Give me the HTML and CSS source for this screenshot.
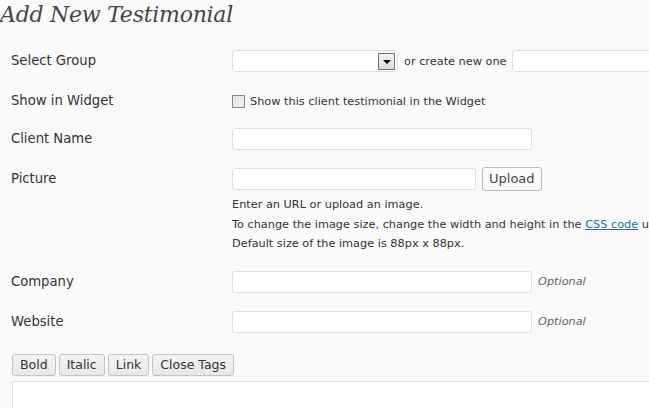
FILE: index.html
```html
<!DOCTYPE html>
<html>
<head>
<meta charset="utf-8">
<link rel="stylesheet" href="styles.css">
</head>
<body>
<div class="wrap">
  <h2 class="title">Add New Testimonial</h2>
  <div class="form">
    <div class="row r1">
      <div class="label">Select Group</div>
      <div class="field inline">
        <div class="select"><span class="arrow"></span></div>
        <span class="small">or create new one</span>
        <div class="input grow"></div>
      </div>
    </div>
    <div class="row r2">
      <div class="label">Show in Widget</div>
      <div class="field inline">
        <span class="checkbox"></span>
        <span class="small">Show this client testimonial in the Widget</span>
      </div>
    </div>
    <div class="row r3">
      <div class="label">Client Name</div>
      <div class="field inline">
        <div class="input w300"></div>
      </div>
    </div>
    <div class="row r4">
      <div class="label">Picture</div>
      <div class="field">
        <div class="inline">
          <div class="input w243"></div>
          <span class="button">Upload</span>
        </div>
        <p class="desc first">Enter an URL or upload an image.</p>
        <p class="desc clip">To change the image size, change the width and height in the <a href="#">CSS code</a> u</p>
        <p class="desc">Default size of the image is 88px x 88px.</p>
      </div>
    </div>
    <div class="row r5">
      <div class="label">Company</div>
      <div class="field inline">
        <div class="input w300"></div>
        <span class="optional">Optional</span>
      </div>
    </div>
    <div class="row r6">
      <div class="label">Website</div>
      <div class="field inline">
        <div class="input w300"></div>
        <span class="optional">Optional</span>
      </div>
    </div>
  </div>
  <div class="quicktags">
    <span class="qt">Bold</span>
    <span class="qt">Italic</span>
    <span class="qt">Link</span>
    <span class="qt">Close Tags</span>
  </div>
  <div class="editor"></div>
</div>
</body>
</html>
```
FILE: styles.css
```css
html, body {
  margin: 0;
  padding: 0;
  background: #f9f9f9;
  overflow: hidden;
}
body {
  width: 649px;
  height: 408px;
  font-family: "DejaVu Sans", Verdana, sans-serif;
  color: #333;
}
.wrap {
  white-space: nowrap;
}
.title {
  margin: 0;
  height: 42px;
  font-family: "DejaVu Serif", Georgia, serif;
  font-style: italic;
  font-weight: normal;
  font-size: 22px;
  line-height: 29px;
  color: #464646;
  letter-spacing: -0.25px;
}
.row {
  display: grid;
  grid-template-columns: 232px 1fr;
  padding: 8px 0 10px;
}
.r3 { padding-top: 6px; }
.r4 { padding-top: 8px; padding-bottom: 17px; }
.r5 { padding-top: 0; }
.label {
  padding-left: 11px;
  font-size: 13.2px;
  line-height: 22px;
}
.field {
  min-width: 0;
}
.inline {
  display: flex;
  align-items: center;
  height: 22px;
}
.input, .select {
  box-sizing: border-box;
  flex-shrink: 0;
  height: 22px;
  background: #fff;
  border: 1px solid #dfdfdf;
  border-radius: 3px;
}
.select {
  width: 166px;
  position: relative;
}
.arrow {
  position: absolute;
  right: 2px;
  top: 2px;
  box-sizing: border-box;
  width: 17px;
  height: 17px;
  border: 1px solid #707070;
  background: linear-gradient(#f4f4f4, #dcdcdc);
}
.arrow::after {
  content: "";
  position: absolute;
  left: 4px;
  top: 6px;
  border-left: 4px solid transparent;
  border-right: 4px solid transparent;
  border-top: 4px solid #000;
}
.small {
  font-size: 11.3px;
  margin: 0 5px 0 6px;
}
.grow {
  flex: 1 0 auto;
  min-width: 160px;
}
.w300 { width: 300px; }
.w243 { width: 244px; }
.checkbox {
  box-sizing: border-box;
  flex-shrink: 0;
  width: 13px;
  height: 13px;
  border: 1px solid #8a8a8a;
  background: linear-gradient(135deg, #dcdcdc, #f8f8f8);
  box-shadow: inset 0 0 0 1px #e8e8e8;
}
.checkbox + .small { margin-left: 5px; }
.button {
  box-sizing: border-box;
  height: 24px;
  margin-left: 6px;
  padding: 0 6px;
  font-size: 13px;
  line-height: 22px;
  background: #fbfbfb;
  border: 1px solid #bbb;
  border-radius: 3px;
  color: #464646;
}
.desc {
  margin: 0;
  font-size: 11.3px;
  line-height: 19.5px;
}
.desc.first { margin-top: 5px; }
.desc a {
  color: #21759b;
}
.optional {
  font-size: 11.3px;
  font-style: italic;
  color: #666;
  margin-left: 6px;
}
.quicktags {
  display: flex;
  gap: 3px;
  padding: 11px 0 0 12px;
}
.qt {
  box-sizing: border-box;
  height: 22px;
  padding: 0 7px;
  font-size: 12.5px;
  line-height: 20px;
  color: #333;
  background: linear-gradient(#f4f4f4, #e8e8e8);
  border: 1px solid #c3c3c3;
  border-radius: 3px;
}
.editor {
  margin: 5px 0 0 12px;
  height: 40px;
  background: #fff;
  border: 1px solid #dfdfdf;
  border-right: none;
}
```
